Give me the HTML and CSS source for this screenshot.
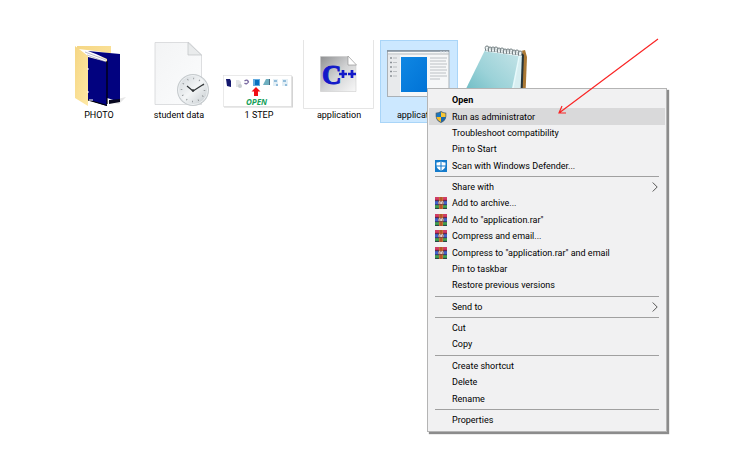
FILE: index.html
```html
<!DOCTYPE html>
<html lang="en">
<head>
<meta charset="utf-8">
<title>Explorer context menu</title>
<link rel="stylesheet" href="styles.css">
</head>
<body>
<svg class="defs" width="0" height="0" aria-hidden="true">
  <defs>
    <linearGradient id="gold" x1="0" y1="0" x2="1" y2="1"><stop offset="0" stop-color="#f5d684"/><stop offset="1" stop-color="#ffe9a5"/></linearGradient>
    <linearGradient id="paper" x1="0" y1="0" x2="1" y2="1"><stop offset="0" stop-color="#f3f4f5"/><stop offset="1" stop-color="#fbfcfd"/></linearGradient>
    <linearGradient id="face" x1="0" y1="0" x2="1" y2="1"><stop offset="0" stop-color="#d0d5d9"/><stop offset=".5" stop-color="#f3f5f6"/><stop offset="1" stop-color="#c3c9cd"/></linearGradient>
    <linearGradient id="grey" x1="0" y1="0" x2="1" y2="1"><stop offset="0" stop-color="#8f9092"/><stop offset=".5" stop-color="#d2d3d4"/><stop offset="1" stop-color="#f8f8f8"/></linearGradient>
    <linearGradient id="blue" x1="0" y1="0" x2="1" y2="1"><stop offset="0" stop-color="#0f87e3"/><stop offset="1" stop-color="#0173d6"/></linearGradient>
    <linearGradient id="teal" x1="0" y1="1" x2="1" y2="0"><stop offset="0" stop-color="#55b0ba"/><stop offset=".5" stop-color="#9bd2d8"/><stop offset="1" stop-color="#c8e5e9"/></linearGradient>
    <symbol id="rar" viewBox="0 0 12 12">
      <rect width="12" height="4" fill="#c8305a"/><rect y="4" width="12" height="4" fill="#3f62c8"/><rect y="8" width="12" height="4" fill="#35964a"/>
      <path d="M0 3.7h12M0 7.8h12M0 11.6h12" stroke="#292447" stroke-width=".8"/>
      <path d="M0 1h12" stroke="#dc587c" stroke-width=".7"/><path d="M0 9h12" stroke="#62b35e" stroke-width=".7"/>
      <rect x="4" width="4" height="12" fill="#b4562a"/><path d="M4.4 0v12M7.6 0v12" stroke="#d48a42" stroke-width=".6"/>
      <rect x="3.2" y="4" width="5.6" height="3.6" fill="#6b3e43"/><path d="M4 7V4.7h1.3V7M6.5 7V4.7H8V7" fill="none" stroke="#eee0d8" stroke-width=".9"/>
    </symbol>
    <symbol id="chevron" viewBox="0 0 6 10"><path d="M.7.5 5.2 5 .7 9.5" fill="none" stroke="#555" stroke-width="1"/></symbol>
  </defs>
</svg>
<main class="desktop">
  <ul class="files">
    <li><button class="file">
      <svg class="art" viewBox="0 0 78 68" aria-hidden="true">
        <path d="M45 62 66 57 59 64z" fill="#e6e6e6"/>
        <path d="M17 6H51V49L17 58z" fill="url(#gold)"/>
        <path d="M18 9 36 11 60 15V17L48 18 27 15z" fill="#fff"/>
        <path d="M28 11 60 14V62L47 58V19L36 14z" fill="#02027f"/>
        <path d="M20 10 46 19V22L28 17z" fill="#fff"/>
        <path d="M28 17 47 22V66L28 60z" fill="#02027f"/>
        <path d="M47 21V64M28 60 47 65.500" stroke="#000" stroke-width="1.200"/><path d="M49 60 60 59V62L49 64z" fill="#080820"/>
        <path d="M25 12 46 20M27 15 46 22" stroke="#77779b" stroke-width=".5"/>
        <path d="M15 6 28 16V66L15 58z" fill="url(#gold)"/>
        <path d="M28 28v2M28 51v2M29 60h4" stroke="#fff"/>
      </svg><span class="name">PHOTO</span></button></li>
    <li><button class="file">
      <svg class="art" viewBox="0 0 78 68" aria-hidden="true">
        <path d="M15 2.500H49L61.500 15V64.500H15z" fill="url(#paper)" stroke="#d4d6d8" stroke-width=".8"/>
        <path d="M48 2.500V15H61.500z" fill="#e9ebec" stroke="#bfc2c4" stroke-width=".7"/>
        <circle cx="53" cy="50" r="16" fill="#c5cacd"/><circle cx="53" cy="50" r="14.600" fill="url(#face)" stroke="#edf0f2"/>
        <circle cx="53" cy="50" r="11.500" fill="none" stroke="#858a8d" stroke-width="1.600" stroke-dasharray=".8 5.221"/>
        <path d="M47 46 53 51 64 44" fill="none" stroke="#303436" stroke-width="1.200"/><circle cx="53" cy="50.500" r="1.300" fill="#303436"/>
      </svg><span class="name">student data</span></button></li>
    <li><button class="file">
      <svg class="art" viewBox="0 0 78 68" aria-hidden="true">
        <rect x="4" y="36.500" width="69" height="31" fill="#d4d4d4"/><rect x="3.500" y="35.500" width="68" height="31" fill="#fff" stroke="#ddd" stroke-width=".6"/>
        <path d="M6 39h4l1 2v6l-4-1z" fill="#14186e"/><path d="M16 40h3l2 2v5h-5z" fill="#e3e5e7"/><circle cx="20" cy="46" r="2" fill="#c8cdd0"/>
        <path d="M24.500 41q3-2 4 1-2 3-4 1" fill="none" stroke="#7969a1" stroke-width="1.300"/>
        <rect x="33" y="39" width="7" height="7" fill="#64acdf"/><rect x="35" y="40" width="4" height="5" fill="#0870bf"/>
        <path d="M43 45l3-6h4l-1 6z" fill="#6eafc0"/><path d="M49 39h1v6h-1" fill="#496b80"/>
        <path d="M53 39h5v7h-5zM62 39h6v7h-6z" fill="#e3eff6"/><path d="M54 41h3M63 41h3M56 45h2M65 45h2" stroke="#428abe"/>
        <path d="M36 47l4.500 4.500H38V56H34V51.500H31.500z" fill="#f20d15"/>
        <text x="36.500" y="65" text-anchor="middle" font-family="Open Sans, sans-serif" font-size="8" font-weight="700" font-style="italic" fill="#16a05a">OPEN</text>
      </svg><span class="name">1 STEP</span></button></li>
    <li><button class="file">
      <svg class="art" viewBox="0 0 78 68" aria-hidden="true">
        <path d="M3.500 0V68.500H73.500V0" fill="#fff" stroke="#dedede" stroke-width=".8"/>
        <path d="M20.500 16.500H48L56 25V51.500H20.500z" fill="url(#grey)" stroke="#c4c4c4" stroke-width=".5"/>
        <path d="M48 16V25H56.500z" fill="#fff" stroke="#888" stroke-width=".6"/>
        <text x="22" y="44" font-family="Liberation Serif, serif" font-size="27" font-weight="700" fill="#1219c9" stroke="#1219c9" stroke-width="1">C</text>
        <path d="M39 34h8M43 30v8M48 34h8M52 30v8" stroke="#1219c9" stroke-width="2.700"/>
      </svg><span class="name">application</span></button></li>
    <li><button class="file selected" aria-pressed="true">
      <svg class="art" viewBox="0 0 78 68" aria-hidden="true">
        <rect x="7.500" y="10.500" width="61.500" height="46" fill="#f6f7f8" stroke="#a9b0b6"/><path d="M7 11h62" stroke="#7e8e9c" stroke-width="1.500"/>
        <path d="M8 14h61" stroke="#b5babd"/><rect x="8" y="15" width="12" height="41" fill="#e8eaec"/>
        <rect x="21" y="17" width="26" height="35" fill="url(#blue)"/>
        <path d="M60 12h2M63 12h2M66 12h2" stroke="#d8dfe5"/>
        <path d="M10 18h2M10 22.500h2M10 27h2M10 31.500h2M10 36h2" stroke="#8b9196" stroke-width="1.500"/>
        <path d="M13 18h4M13 22.500h4M13 27h4M13 31.500h4M13 36h4M50 18h17M50 21h16M50 24h17M50 27h16M50 30h17M50 33h16M50 36h17M50 39h10" stroke="#aeb2b6" stroke-width=".8"/>
      </svg><span class="name">application</span></button></li>
    <li><button class="file" aria-label="Notebook">
      <svg class="art" viewBox="0 0 78 68" aria-hidden="true">
        <path d="M61 11 65 10 67 17 65 66H58z" fill="#aa7834"/><path d="M61 12 64 15 62 66H56z" fill="#27353a"/>
        <path d="M57 14 62 12 60 66H48z" fill="#d8eef1"/><path d="M26 8 61 13 48 67 0 61z" fill="url(#teal)"/><path d="M60 13 49 67" stroke="#e7f9fb" stroke-width="1.500"/>
        <path d="M26 9 62 14" stroke="#eff5f6" stroke-width="5"/>
        <g fill="none" stroke="#737f82" stroke-width="1"><path id="ring" d="M26 11q-2-5 1-5t1 5"/><use href="#ring" x="3" y="1"/><use href="#ring" x="6" y="1"/><use href="#ring" x="9" y="1"/><use href="#ring" x="12" y="2"/><use href="#ring" x="15" y="2"/><use href="#ring" x="18" y="3"/><use href="#ring" x="21" y="3"/><use href="#ring" x="24" y="3"/><use href="#ring" x="27" y="4"/><use href="#ring" x="30" y="4"/><use href="#ring" x="33" y="5"/></g>
      </svg></button></li>
  </ul>

  <menu class="menu">
    <li><button class="item strong">Open</button></li>
    <li><button class="item active"><svg class="icon" viewBox="0 0 12 12" aria-hidden="true"><path d="M6 0Q8 1.500 11.300 1.700V5.500Q11 9.500 6 12 1 9.500.7 5.500V1.700Q4 1.500 6 0z" fill="#4e6576"/><path d="M6 1V6H1.500V2.500Q4 2.300 6 1z" fill="#1975bd"/><path d="M6 1Q8 2.300 10.500 2.500V6H6z" fill="#f7c634"/><path d="M1.500 6H6V11Q2 9 1.500 6z" fill="#f7bd28"/><path d="M6 6H10.500Q10 9 6 11z" fill="#1668b1"/></svg>Run as administrator</button></li>
    <li><button class="item">Troubleshoot compatibility</button></li>
    <li><button class="item">Pin to Start</button></li>
    <li><button class="item"><svg class="icon" viewBox="0 0 12 12" aria-hidden="true"><rect width="12" height="12" fill="#147bcb"/><path d="M6 1.500Q8 2.500 10.500 2.500V5.500Q10.300 9 6 10.800 1.700 9 1.500 5.500V2.500Q4 2.500 6 1.500z" fill="#fff"/><path d="M6 1v10M1 6h10" stroke="#147bcb" stroke-width="1"/></svg>Scan with Windows Defender...</button></li>
    <li class="rule" role="separator"></li>
    <li><button class="item">Share with<svg class="more" aria-hidden="true"><use href="#chevron"/></svg></button></li>
    <li><button class="item"><svg class="icon" aria-hidden="true"><use href="#rar"/></svg>Add to archive...</button></li>
    <li><button class="item"><svg class="icon" aria-hidden="true"><use href="#rar"/></svg>Add to "application.rar"</button></li>
    <li><button class="item"><svg class="icon" aria-hidden="true"><use href="#rar"/></svg>Compress and email...</button></li>
    <li><button class="item"><svg class="icon" aria-hidden="true"><use href="#rar"/></svg>Compress to "application.rar" and email</button></li>
    <li><button class="item">Pin to taskbar</button></li>
    <li><button class="item">Restore previous versions</button></li>
    <li class="rule" role="separator"></li>
    <li><button class="item">Send to<svg class="more" aria-hidden="true"><use href="#chevron"/></svg></button></li>
    <li class="rule" role="separator"></li>
    <li><button class="item">Cut</button></li>
    <li><button class="item">Copy</button></li>
    <li class="rule" role="separator"></li>
    <li><button class="item">Create shortcut</button></li>
    <li><button class="item">Delete</button></li>
    <li><button class="item">Rename</button></li>
    <li class="rule" role="separator"></li>
    <li><button class="item">Properties</button></li>
  </menu>

  <svg class="pointer" viewBox="0 0 102 78" aria-hidden="true"><path d="M101 1 2 75M5 68 2 75 9 75" fill="none" stroke="#fa2525" stroke-width="1.200"/></svg>
</main>
</body>
</html>
```
FILE: styles.css
```css
* { box-sizing: border-box; }

body {
  margin: 0;
  background: #fff;
  color: #000;
  font-family: Roboto, "Open Sans", sans-serif;
  font-size: 9px;
}

button {
  border: 0;
  background: none;
  color: inherit;
  font: inherit;
  padding: 0;
}

.defs { position: absolute; }

.desktop {
  position: relative;
  min-height: 100vh;
  padding: 40px 0 0 60px;
}

.files {
  display: grid;
  grid-template-columns: repeat(6, 78px);
  column-gap: 2px;
  list-style: none;
  margin: 0;
  padding: 0;
}

.file {
  display: flex;
  flex-direction: column;
  align-items: center;
  width: 100%;
  min-height: 83px;
}

.file.selected {
  background: #cce8ff;
  box-shadow: inset 0 0 0 1px #a9d5f8;
}

.art {
  display: block;
  width: 100%;
  height: 68px;
  overflow: visible;
}

.name { line-height: 14px; }

.menu {
  position: absolute;
  top: 88px;
  left: 427px;
  display: flex;
  flex-direction: column;
  width: 240px;
  min-height: 344px;
  margin: 0;
  padding: 3px 1px;
  list-style: none;
  background: #f1f1f2;
  border: 1px solid #b4b4b4;
  box-shadow: 2px 2px 1px #8c8c8c;
}

.menu li {
  display: flex;
  flex: 1;
}

.menu .rule {
  flex: 0 0 5px;
  align-items: center;
  padding: 0 6px;
}

.rule::before {
  content: "";
  flex: 1;
  height: 1px;
  background: #a0a0a0;
}

.item {
  position: relative;
  display: flex;
  flex: 1;
  align-items: center;
  padding: 0 7px 0 23px;
  line-height: 16px;
  white-space: nowrap;
}

.item.active { background: #d9d9da; }

.item.strong { font-weight: 700; }

.icon {
  position: absolute;
  left: 6px;
  width: 12px;
  height: 12px;
}

.more {
  width: 6px;
  height: 10px;
  margin-left: auto;
}

.pointer {
  position: absolute;
  top: 38px;
  left: 557px;
  width: 102px;
  height: 78px;
  pointer-events: none;
}
```
